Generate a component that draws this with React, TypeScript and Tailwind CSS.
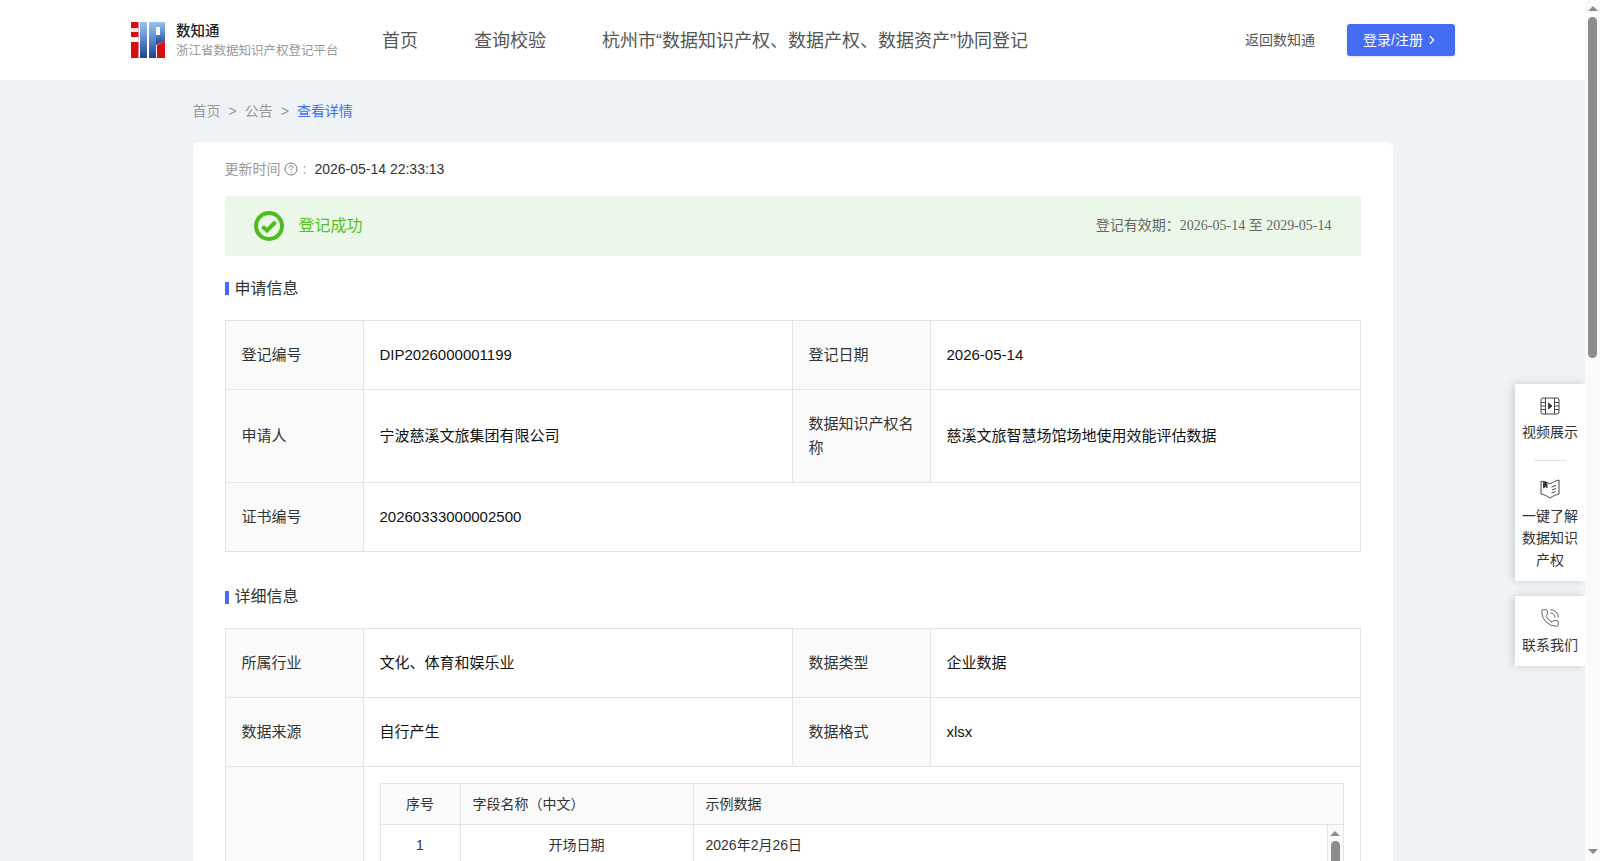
import { ChevronRight, PhoneCall } from 'lucide-react'
import type { ReactNode } from 'react'

const labelCls = 'border border-[#e4e4e4] bg-[#fafafa] px-4 text-[#333] leading-6'
const valueCls = 'border border-[#e4e4e4] px-4 text-[#111] leading-6'

function Logo() {
  return (
    <svg width="34" height="36" viewBox="0 0 34 36" className="shrink-0">
      <defs>
        <linearGradient id="blue" x1="0" y1="0" x2="0" y2="1">
          <stop offset="0" stopColor="#9cc3ec" />
          <stop offset="0.45" stopColor="#5f8fd0" />
          <stop offset="1" stopColor="#1f3f92" />
        </linearGradient>
      </defs>
      <rect x="0" y="0" width="7.5" height="36" fill="#d90c12" />
      <rect x="0" y="6" width="7.5" height="4" fill="#fbe6e6" />
      <rect x="0" y="15" width="7.5" height="5" fill="#fff" />
      <rect x="9" y="0" width="7" height="36" fill="url(#blue)" />
      <rect x="18" y="0" width="7" height="36" fill="url(#blue)" />
      <path d="M25 0H34V19L25 23V13H29V5H25Z" fill="url(#blue)" />
      <path d="M26 23L34 19V36H26Z" fill="#d90c12" />
    </svg>
  )
}

function SectionTitle({ children, className = '' }: { children: ReactNode; className?: string }) {
  return (
    <div className={`flex items-center pt-px text-base text-[#333] ${className}`}>
      <span className="mr-[6px] h-[13px] w-1 bg-[#446cf5]" />
      {children}
    </div>
  )
}

function Cols() {
  return (
    <colgroup>
      <col className="w-[138px]" />
      <col className="w-[429px]" />
      <col className="w-[138px]" />
      <col />
    </colgroup>
  )
}

function SideItem({ icon, children }: { icon: ReactNode; children: ReactNode }) {
  return (
    <div className="flex flex-col items-center text-center text-sm leading-[22px] whitespace-nowrap text-[#333]">
      {icon}
      <div className="mt-[6px]">{children}</div>
    </div>
  )
}

function SidePanel() {
  return (
    <div className="absolute top-[384px] right-0 flex w-[70px] flex-col gap-[15px]">
      <div className="flex h-[197px] flex-col items-center bg-white pt-[13px] shadow-[-2px_0_8px_rgba(0,0,0,0.15)]">
        <SideItem
          icon={
            <svg width="20" height="18" viewBox="0 0 20 18" fill="none" stroke="#444" strokeWidth="1">
              <rect x="1" y="1" width="18" height="16" rx="2" />
              <path d="M5.5 1V17M14.5 1V17M1 5.5H5.5M1 9H5.5M1 12.5H5.5M14.5 5.5H19M14.5 9H19M14.5 12.5H19" />
              <path d="M8.5 6L12 9L8.5 12Z" fill="#333" />
            </svg>
          }
        >
          视频展示
        </SideItem>
        <div className="mt-[17px] mb-[18px] h-px w-8 shrink-0 bg-[#e2e2e2]" />
        <SideItem
          icon={
            <svg width="20" height="20" viewBox="0 0 20 20" fill="none" stroke="#444" strokeWidth="1">
              <path d="M1 2.5C4 2 7 3 10 5C13 3 16 1.5 19 1V15C16 15.5 13 17 10 19C7 17 4 15.5 1 15Z" />
              <path d="M3.5 2.5V9L5.5 7.5L7 9V3.5" fill="#333" />
              <path d="M11.5 8L16 6.5M12 11L16 9.5M11.5 14L15.5 12.5" />
            </svg>
          }
        >
          一键了解
          <br />
          数据知识
          <br />
          产权
        </SideItem>
      </div>
      <div className="flex h-[70px] flex-col items-center bg-white pt-[12px] shadow-[-2px_0_8px_rgba(0,0,0,0.15)]">
        <SideItem icon={<PhoneCall size={20} strokeWidth={1} color="#444" />}>联系我们</SideItem>
      </div>
    </div>
  )
}

function PageScrollbar() {
  return (
    <div className="flex w-[15px] shrink-0 flex-col items-center bg-[#fafafa] pt-[6px]">
      <div className="h-0 w-0 border-x-[5px] border-b-[5px] border-x-transparent border-b-[#8c8c8c]" />
      <div className="mt-[6px] h-[341px] w-[9px] rounded-full bg-[#8c8c8c]" />
      <div className="mt-auto mb-[7px] h-0 w-0 border-x-[5px] border-t-[5px] border-x-transparent border-t-[#8c8c8c]" />
    </div>
  )
}

export default function App() {
  return (
    <div className="flex h-screen overflow-hidden bg-white font-['Liberation_Sans','Noto_Sans_CJK_SC',sans-serif]">
      <div className="relative min-w-0 flex-1 overflow-hidden bg-[#eff3f6]">
        <header className="flex h-20 items-center bg-white pr-[130px] pl-[131px]">
          <Logo />
          <div className="mt-0.5 ml-[11px] w-[206px]">
            <div className="text-[14.5px] leading-5 font-medium text-[#222]">数知通</div>
            <div className="text-[12.5px] leading-5 text-[#999]">浙江省数据知识产权登记平台</div>
          </div>
          <nav className="mt-0.5 flex gap-14 text-lg text-[#555]">
            <span>首页</span>
            <span>查询校验</span>
            <span>杭州市“数据知识产权、数据产权、数据资产”协同登记</span>
          </nav>
          <span className="ml-auto text-sm text-[#555]">返回数知通</span>
          <button className="ml-8 flex h-8 w-[108px] items-center justify-center rounded-[3px] bg-[#446cf5] text-sm text-white shadow-sm">
            登录/注册
            <ChevronRight size={14} className="ml-0.5" />
          </button>
        </header>

        <div className="mx-auto w-[1200px]">
          <div className="flex h-[62px] items-center gap-2 text-sm text-[#999]">
            <span>首页</span>
            <span>&gt;</span>
            <span>公告</span>
            <span>&gt;</span>
            <span className="text-[#446cf5]">查看详情</span>
          </div>

          <div className="rounded-md bg-white px-8 pb-8">
            <div className="flex h-[54px] items-center text-sm text-[#999]">
              更新时间
              <svg width="14" height="14" viewBox="0 0 14 14" fill="none" stroke="#777" className="mx-[3px]">
                <circle cx="7" cy="7" r="6" />
                <path d="M5.2 5.5C5.2 4.4 6 3.8 7 3.8C8 3.8 8.8 4.4 8.8 5.4C8.8 6.6 7 6.7 7 8.2" />
                <path d="M7 9.5V10.6" />
              </svg>
              <span className="mr-[8px] ml-0.5">:</span>
              <span className="text-[#333]">2026-05-14 22:33:13</span>
            </div>

            <div className="flex h-[60px] items-center justify-between bg-[#ebf7e8] pr-[29px] pl-[29px]">
              <div className="flex items-center gap-[15px] text-base text-[#52c41a]">
                <svg width="30" height="30" viewBox="0 0 30 30" fill="none" stroke="#4cbd1c">
                  <circle cx="15" cy="15" r="13" strokeWidth="4" />
                  <path d="M8.5 15.5L13 19.5L21.5 11" strokeWidth="4" />
                </svg>
                登记成功
              </div>
              <span className="font-['Liberation_Serif','Noto_Sans_CJK_SC',serif] text-sm text-[#666]">
                登记有效期：2026-05-14 至 2029-05-14
              </span>
            </div>

            <SectionTitle className="h-16">申请信息</SectionTitle>

            <table className="w-full table-fixed border-collapse text-[15px]">
              <Cols />
              <tbody>
                <tr className="h-[69px]">
                  <td className={labelCls}>登记编号</td>
                  <td className={valueCls}>DIP2026000001199</td>
                  <td className={labelCls}>登记日期</td>
                  <td className={valueCls}>2026-05-14</td>
                </tr>
                <tr className="h-[93px]">
                  <td className={labelCls}>申请人</td>
                  <td className={valueCls}>宁波慈溪文旅集团有限公司</td>
                  <td className={labelCls}>数据知识产权名称</td>
                  <td className={valueCls}>慈溪文旅智慧场馆场地使用效能评估数据</td>
                </tr>
                <tr className="h-[69px]">
                  <td className={labelCls}>证书编号</td>
                  <td className={valueCls} colSpan={3}>
                    20260333000002500
                  </td>
                </tr>
              </tbody>
            </table>

            <SectionTitle className="mt-[13px] h-[63px]">详细信息</SectionTitle>

            <table className="w-full table-fixed border-collapse text-[15px]">
              <Cols />
              <tbody>
                <tr className="h-[69px]">
                  <td className={labelCls}>所属行业</td>
                  <td className={valueCls}>文化、体育和娱乐业</td>
                  <td className={labelCls}>数据类型</td>
                  <td className={valueCls}>企业数据</td>
                </tr>
                <tr className="h-[69px]">
                  <td className={labelCls}>数据来源</td>
                  <td className={valueCls}>自行产生</td>
                  <td className={labelCls}>数据格式</td>
                  <td className={valueCls}>xlsx</td>
                </tr>
                <tr>
                  <td className={labelCls} />
                  <td className="border border-[#e4e4e4] p-4" colSpan={3}>
                    <table className="w-full table-fixed border-collapse text-sm text-[#333]">
                      <colgroup>
                        <col className="w-[80px]" />
                        <col className="w-[233px]" />
                        <col />
                        <col className="w-[16px]" />
                      </colgroup>
                      <tbody>
                        <tr className="h-[41px] bg-[#fafafa]">
                          <td className="border border-[#e4e4e4] text-center">序号</td>
                          <td className="border border-[#e4e4e4] px-3">字段名称（中文）</td>
                          <td className="border border-[#e4e4e4] px-3" colSpan={2}>
                            示例数据
                          </td>
                        </tr>
                        <tr className="h-[41px]">
                          <td className="border border-[#e4e4e4] text-center">1</td>
                          <td className="border border-[#e4e4e4] text-center">开场日期</td>
                          <td className="border border-[#e4e4e4] px-3">2026年2月26日</td>
                          <td className="border border-[#e4e4e4] bg-[#fafafa] align-top">
                            <div className="flex flex-col items-center pt-[6px]">
                              <div className="h-0 w-0 border-x-[5px] border-b-[5px] border-x-transparent border-b-[#8c8c8c]" />
                              <div className="mt-[5px] h-6 w-[9px] rounded-t-full bg-[#8c8c8c]" />
                            </div>
                          </td>
                        </tr>
                      </tbody>
                    </table>
                  </td>
                </tr>
              </tbody>
            </table>
          </div>
        </div>

        <SidePanel />
      </div>
      <PageScrollbar />
    </div>
  )
}
